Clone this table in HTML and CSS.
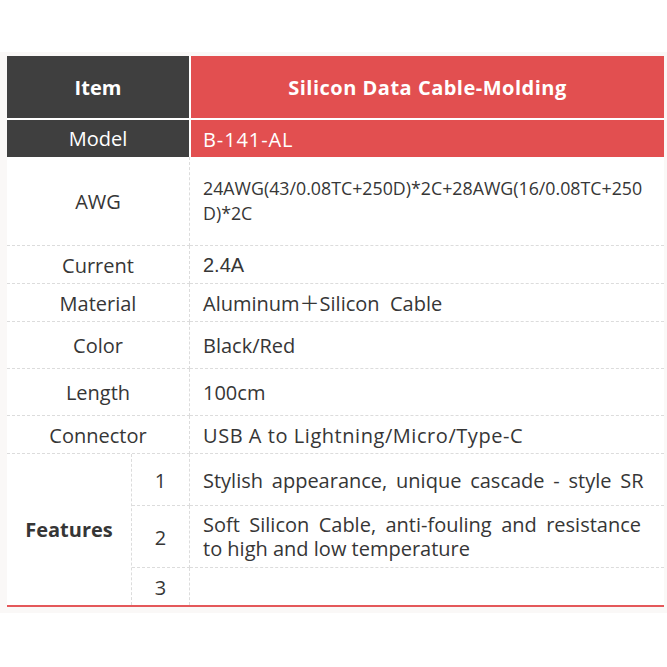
FILE: index.html
```html
<!DOCTYPE html>
<html lang="en">
<head>
<meta charset="utf-8">
<title>Silicon Data Cable-Molding</title>
<link rel="stylesheet" href="styles.css">
</head>
<body>
<div class="frame">
  <div class="sheet">
    <div class="cell head label-span">Item</div>
    <div class="cell head title">Silicon Data Cable-Molding</div>

    <div class="cell model label-span">Model</div>
    <div class="cell model value spaced">B-141-AL</div>

    <div class="cell label label-span">AWG</div>
    <div class="cell value awg">24AWG(43/0.08TC+250D)*2C+28AWG(16/0.08TC+250<br>D)*2C</div>

    <div class="cell label label-span">Current</div>
    <div class="cell value arial">2.4A</div>

    <div class="cell label label-span">Material</div>
    <div class="cell value pre">Aluminum＋Silicon  Cable</div>

    <div class="cell label label-span">Color</div>
    <div class="cell value">Black/Red</div>

    <div class="cell label label-span">Length</div>
    <div class="cell value">100cm</div>

    <div class="cell label label-span">Connector</div>
    <div class="cell value loose">USB A to Lightning/Micro/Type-C</div>

    <div class="cell label features">Features</div>
    <div class="cell label num">1</div>
    <div class="cell value wide">Stylish appearance, unique cascade - style SR</div>
    <div class="cell label num">2</div>
    <div class="cell value multi"><p class="just">Soft Silicon Cable, anti-fouling and resistance to high and low temperature</p></div>
    <div class="cell label num last">3</div>
    <div class="cell value last"></div>
  </div>
</div>
</body>
</html>
```
FILE: styles.css
```css
html, body {
  margin: 0;
  padding: 0;
  background: #ffffff;
}

body {
  font-family: "Open Sans", "Noto Sans", "Noto Sans CJK KR", sans-serif;
  color: #363636;
}

.frame {
  margin-top: 52px;
  background: #faf8f7;
  padding: 4px 3px 6px 7px;
}

.sheet {
  display: grid;
  grid-template-columns: 125px 58px 474px;
  grid-template-rows: 64px 37px 89px 38px 38px 47px 47px 38px 52px 62px 37px;
  background: #ffffff;
  border-bottom: 2px solid #e4585a;
}

.cell {
  box-sizing: border-box;
  display: flex;
  align-items: center;
  font-size: 20px;
  line-height: 25px;
  min-width: 0;
}

.label-span {
  grid-column: 1 / 3;
  justify-content: center;
}

.head {
  font-weight: 700;
  color: #ffffff;
  border-bottom: 2px solid #ffffff;
}

.head.label-span {
  background: #3f3f3f;
  border-right: 1px solid #ffffff;
}

.head.title {
  background: #e24f50;
  border-left: 1px solid #ffffff;
  justify-content: center;
  letter-spacing: 0.5px;
}

.model {
  color: #ffffff;
}

.model.label-span {
  background: #3f3f3f;
  border-right: 1px solid #ffffff;
}

.model.value {
  background: #e24f50;
  border-left: 1px solid #ffffff;
  padding-left: 12px;
  border-bottom: none;
}

.spaced {
  letter-spacing: 0.9px;
}

.label {
  border-right: 1px dashed #dcdcdc;
  border-bottom: 1px dashed #dcdcdc;
  padding-top: 1px;
}

.value {
  padding-left: 13px;
  padding-right: 18px;
  padding-top: 1px;
  border-bottom: 1px dashed #dcdcdc;
}

.awg {
  font-size: 17.8px;
  line-height: 25px;
  padding-top: 0;
  padding-bottom: 1px;
}

.arial {
  font-family: "Liberation Sans", Arial, sans-serif;
}

.pre {
  white-space: pre;
}

.loose {
  letter-spacing: 0.55px;
}

.features {
  grid-column: 1;
  grid-row: 9 / 12;
  justify-content: center;
  font-weight: 700;
  border-bottom: none;
  padding-bottom: 2px;
}

.num {
  grid-column: 2;
  justify-content: center;
}

.wide {
  word-spacing: 3.6px;
}

.multi {
  padding-right: 23px;
}

.multi .just {
  margin: 0;
  text-align: justify;
  line-height: 24px;
}

.last {
  border-bottom: none;
}
```
